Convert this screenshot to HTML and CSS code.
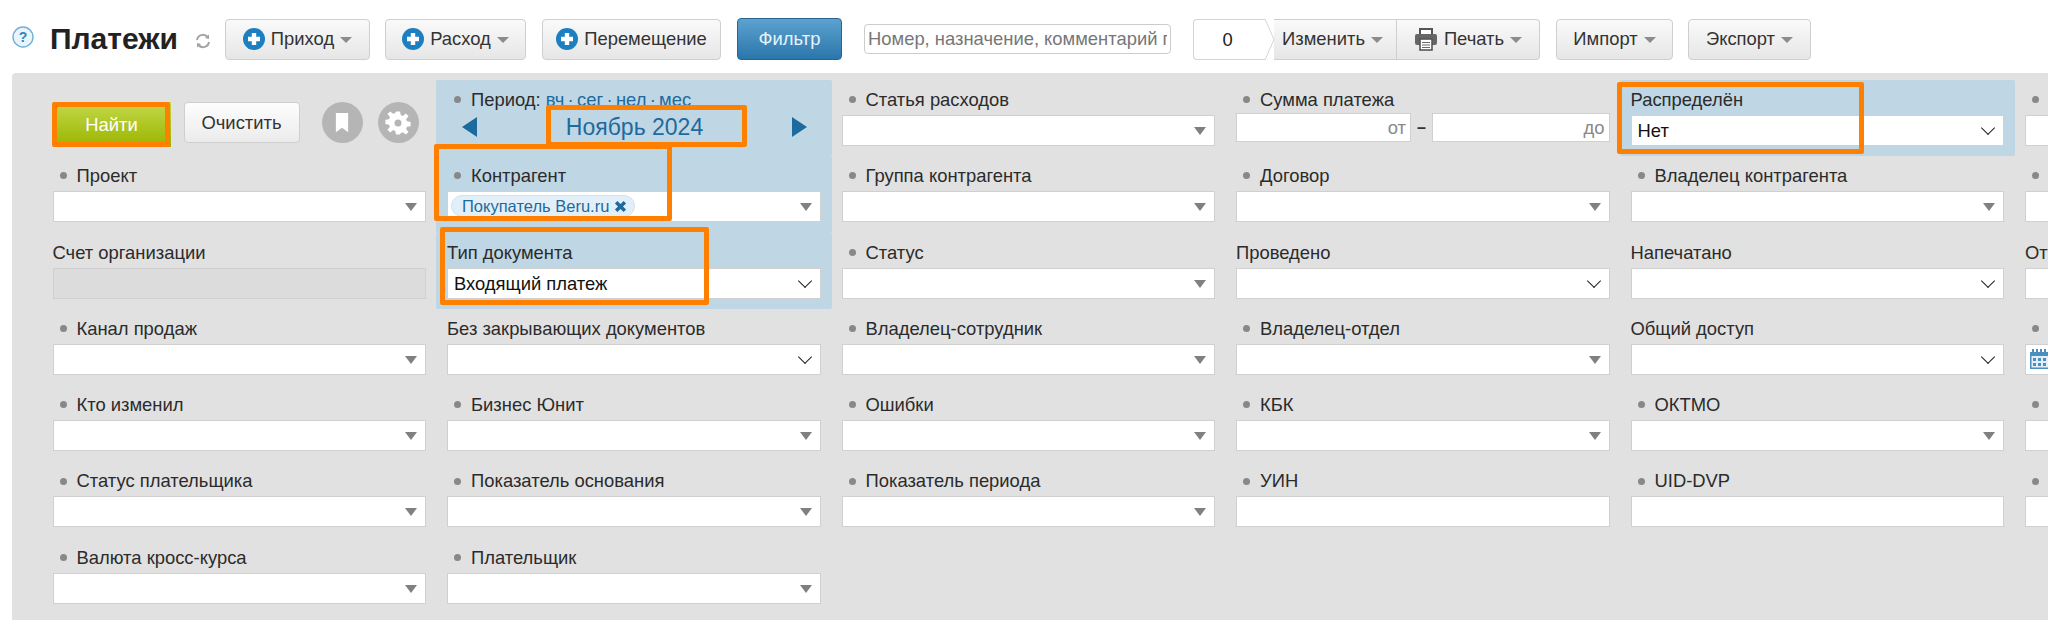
FILE: index.html
```html
<!DOCTYPE html>
<html>
    <head>
        <meta charset="utf-8">
        <title>Платежи</title>
        <link rel="stylesheet" href="styles.css">
    </head>
    <body>
        <svg width="0" height="0" class="defs">
            <symbol id="plus" viewBox="0 0 22 22">
                <circle cx="11" cy="11" r="11" fill="#1d7fbf"/>
                <path d="M11 5v12M5 11h12" stroke="#fff" stroke-width="4.4"/>
            </symbol>
        </svg>
        <div class="toolbar">
            <svg class="help" viewBox="0 0 22 22"><circle cx="11" cy="11" r="10" fill="#eaf5fb" stroke="#6fb1d8" stroke-width="1.4"/><text x="11" y="15.5" text-anchor="middle" class="help-mark">?</text></svg>
            <h1>Платежи</h1>
            <svg class="refresh" viewBox="0 0 16 16" fill="none" stroke="#a3a3a3" stroke-width="2"><path d="M2 7a6 6 0 0 1 10.5-3"/><path d="M14 9a6 6 0 0 1-10.5 3"/><path d="M10 5l4 1V1.500z" fill="#a3a3a3" stroke="none"/><path d="M6 11l-4-1v4.500z" fill="#a3a3a3" stroke="none"/></svg>
            <button class="btn w-prihod"><svg class="plus"><use href="#plus"/></svg>Приход<span class="caret"></span></button>
            <button class="btn w-rashod"><svg class="plus"><use href="#plus"/></svg>Расход<span class="caret"></span></button>
            <button class="btn w-move"><svg class="plus"><use href="#plus"/></svg>Перемещение</button>
            <button class="btn-filter">Фильтр</button>
            <input class="search" type="text" placeholder="Номер, назначение, комментарий плательщика">
            <div class="group">
                <div class="count">0</div>
                <svg class="count-tip" viewBox="0 0 10 41" preserveAspectRatio="none"><path d="M0 0l9 20.500L0 41" fill="#fff" stroke="#d4d4d4"/></svg>
                <div class="group-item g-edit">Изменить<span class="caret"></span></div>
                <div class="group-item g-print">
                    <svg class="print" viewBox="0 0 24 24"><path d="M6 7V2h12v5" fill="#fff" stroke="#555" stroke-width="2"/><rect x="1" y="7" width="22" height="11" rx="2" fill="#666"/><rect x="6" y="12" width="12" height="11" fill="#fff" stroke="#555" stroke-width="1.600"/><path d="M8 15.500h8M8 18h8M8 20.500h8" stroke="#666"/></svg>
                    Печать<span class="caret"></span>
                </div>
            </div>
            <button class="btn w-import">Импорт<span class="caret"></span></button>
            <button class="btn w-export">Экспорт<span class="caret"></span></button>
        </div>

        <div class="panel">
            <div class="grid">
                <div class="field actions">
                    <button class="btn-find">Найти</button>
                    <button class="btn-clear">Очистить</button>
                    <div class="round"><svg viewBox="0 0 16 22" width="14" height="21"><path d="M1 0h14v22l-7-5-7 5z" fill="#fff"/></svg></div>
                    <div class="round"><svg viewBox="0 0 24 24" width="28" height="28"><path d="M10 1h4l.6 3.400 2 .9L19.500 3l2.500 2.500-2.300 2.900.9 2 3.400.6v4l-3.400.6-.9 2 2.300 2.900-2.500 2.500-2.900-2.300-2 .9L14 23h-4l-.6-3.400-2-.9L4.500 21 2 18.500l2.300-2.900-.9-2L0 13V9l3.400-.6.900-2L2 3.500 4.500 1l2.900 2.300 2-.9z" fill="#fff" transform="translate(1.200 1.200) scale(.9)"/><circle cx="12" cy="12" r="3" fill="#b5b5b5"/></svg></div>
                </div>
                <div class="field hl period">
                    <div class="label"><i class="dot"></i>Период: <a class="periods">вч · сег · нел · мес</a></div>
                    <div class="month-row">
                        <span class="arrow-left"></span>
                        <span class="month">Ноябрь 2024</span>
                        <span class="arrow-right"></span>
                    </div>
                </div>
                <div class="field"><div class="label"><i class="dot"></i>Статья расходов</div><div class="box tri"></div></div>
                <div class="field"><div class="label"><i class="dot"></i>Сумма платежа</div>
                    <div class="range"><div class="box small">от</div><span class="dash">–</span><div class="box small grow">до</div></div>
                </div>
                <div class="field hl"><div class="label">Распределён</div><div class="box chev value">Нет</div></div>
                <div class="field"><div class="label"><i class="dot"></i></div><div class="box"></div></div>

                <div class="field"><div class="label"><i class="dot"></i>Проект</div><div class="box tri"></div></div>
                <div class="field hl"><div class="label"><i class="dot"></i>Контрагент</div><div class="box tri"><span class="chip">Покупатель Beru.ru<svg class="chip-x" viewBox="0 0 12 12"><path d="M2 2l8 8M10 2l-8 8" stroke="#1d6a9e" stroke-width="3.2"/></svg></span></div></div>
                <div class="field"><div class="label"><i class="dot"></i>Группа контрагента</div><div class="box tri"></div></div>
                <div class="field"><div class="label"><i class="dot"></i>Договор</div><div class="box tri"></div></div>
                <div class="field"><div class="label"><i class="dot"></i>Владелец контрагента</div><div class="box tri"></div></div>
                <div class="field"><div class="label"><i class="dot"></i></div><div class="box"></div></div>

                <div class="field"><div class="label">Счет организации</div><div class="box disabled"></div></div>
                <div class="field hl"><div class="label">Тип документа</div><div class="box chev value">Входящий платеж</div></div>
                <div class="field"><div class="label"><i class="dot"></i>Статус</div><div class="box tri"></div></div>
                <div class="field"><div class="label">Проведено</div><div class="box chev"></div></div>
                <div class="field"><div class="label">Напечатано</div><div class="box chev"></div></div>
                <div class="field"><div class="label">От</div><div class="box"></div></div>

                <div class="field"><div class="label"><i class="dot"></i>Канал продаж</div><div class="box tri"></div></div>
                <div class="field"><div class="label">Без закрывающих документов</div><div class="box chev"></div></div>
                <div class="field"><div class="label"><i class="dot"></i>Владелец-сотрудник</div><div class="box tri"></div></div>
                <div class="field"><div class="label"><i class="dot"></i>Владелец-отдел</div><div class="box tri"></div></div>
                <div class="field"><div class="label">Общий доступ</div><div class="box chev"></div></div>
                <div class="field"><div class="label"><i class="dot"></i></div>
                    <div class="box"><svg class="cal" viewBox="0 0 20 20"><path d="M0 3h20v17H0z" fill="#4a8fc0"/><path d="M2 0h2v4H2zM6 0h2v4H6zM10 0h2v4h-2zM14 0h2v4h-2z" fill="#4a8fc0"/><path d="M1.500 7h17v11.500h-17z" fill="#e3eef6"/><path d="M3 9h3v3H3zM8 9h3v3H8zM13 9h3v3h-3zM3 14h3v3H3zM8 14h3v3H8zM13 14h3v3h-3z" fill="#4a8fc0"/></svg></div>
                </div>

                <div class="field"><div class="label"><i class="dot"></i>Кто изменил</div><div class="box tri"></div></div>
                <div class="field"><div class="label"><i class="dot"></i>Бизнес Юнит</div><div class="box tri"></div></div>
                <div class="field"><div class="label"><i class="dot"></i>Ошибки</div><div class="box tri"></div></div>
                <div class="field"><div class="label"><i class="dot"></i>КБК</div><div class="box tri"></div></div>
                <div class="field"><div class="label"><i class="dot"></i>ОКТМО</div><div class="box tri"></div></div>
                <div class="field"><div class="label"><i class="dot"></i></div><div class="box"></div></div>

                <div class="field"><div class="label"><i class="dot"></i>Статус плательщика</div><div class="box tri"></div></div>
                <div class="field"><div class="label"><i class="dot"></i>Показатель основания</div><div class="box tri"></div></div>
                <div class="field"><div class="label"><i class="dot"></i>Показатель периода</div><div class="box tri"></div></div>
                <div class="field"><div class="label"><i class="dot"></i>УИН</div><div class="box"></div></div>
                <div class="field"><div class="label"><i class="dot"></i>UID-DVP</div><div class="box"></div></div>
                <div class="field"><div class="label"><i class="dot"></i></div><div class="box"></div></div>

                <div class="field"><div class="label"><i class="dot"></i>Валюта кросс-курса</div><div class="box tri"></div></div>
                <div class="field"><div class="label"><i class="dot"></i>Плательщик</div><div class="box tri"></div></div>
            </div>
        </div>

        <!-- orange marks drawn over the screenshot -->
        <div class="mark m-find"></div>
        <div class="mark m-month"></div>
        <div class="mark m-agent"></div>
        <div class="mark m-type"></div>
        <div class="mark m-dist"></div>
    </body>
</html>
```

FILE: styles.css
```css
html, body {
    margin: 0;
    padding: 0;
    height: 620px;
    overflow: hidden;
    background: #fff;
    font-family: "Liberation Sans", Arial, sans-serif;
    color: #222;
}
.defs {
    position: absolute;
}
.toolbar {
    display: flex;
    align-items: center;
    height: 42px;
    padding: 18px 0 13px 12px;
    white-space: nowrap;
}
.help {
    width: 22px;
    height: 22px;
    margin-right: 16px;
    margin-top: -5px;
}
.help-mark {
    font-size: 14px;
    font-weight: bold;
    fill: #2f86bd;
    font-family: "Liberation Sans", sans-serif;
}
h1 {
    margin: 0;
    font-size: 30px;
    line-height: 42px;
    width: 129px;
    color: #222;
}
.refresh {
    width: 16px;
    height: 16px;
    margin: 4px 14px 0 16px;
}
.btn, .group-item {
    display: flex;
    align-items: center;
    justify-content: center;
    box-sizing: border-box;
    height: 41px;
    border: 1px solid #cfcfcf;
    border-radius: 4px;
    background: linear-gradient(#fafafa, #e6e6e6);
    font-family: inherit;
    font-size: 18.400px;
    color: #333;
    padding: 0;
}
.plus {
    width: 22px;
    height: 22px;
    margin-right: 6px;
}
.caret {
    display: inline-block;
    width: 0;
    height: 0;
    margin-left: 6px;
    margin-top: 2px;
    border-left: 6.500px solid transparent;
    border-right: 6.500px solid transparent;
    border-top: 6px solid #8c8c8c;
}
.w-prihod { width: 145px; margin-right: 15px; }
.w-rashod { width: 141px; margin-right: 16px; }
.w-move { width: 179px; margin-right: 16px; }
.w-import { width: 117px; margin-right: 15px; }
.w-export { width: 123px; }
.btn-filter {
    box-sizing: border-box;
    width: 105px;
    height: 42px;
    margin-right: 22px;
    border: 1px solid #2a6491;
    border-radius: 4px;
    background: linear-gradient(#5da2d0, #2a76ab);
    color: #e8f3fa;
    font-family: inherit;
    font-size: 18.400px;
}
.search {
    box-sizing: border-box;
    width: 307px;
    height: 30px;
    margin-right: 22px;
    padding: 0 3px;
    border: 1px solid #ccc;
    border-radius: 4px;
    font-family: inherit;
    font-size: 18.400px;
}
.search::placeholder {
    color: #777;
}
.group {
    display: flex;
    align-items: center;
    position: relative;
    margin-right: 16px;
}
.count {
    box-sizing: border-box;
    width: 72px;
    height: 41px;
    line-height: 39px;
    text-align: center;
    padding-right: 4px;
    font-size: 18.400px;
    border: 1px solid #d4d4d4;
    border-right: none;
    border-radius: 4px 0 0 4px;
    background: #fff;
}
.count-tip {
    width: 10px;
    height: 41px;
    margin-right: -1px;
    position: relative;
    z-index: 1;
}
.g-edit {
    width: 123px;
    padding-right: 5px;
    border-radius: 0;
    border-left: none;
}
.g-print {
    width: 143px;
    border-left: none;
    border-radius: 0 4px 4px 0;
}
.print {
    width: 24px;
    height: 24px;
    margin-right: 6px;
}
.panel {
    margin-left: 12px;
    height: 547px;
    padding: 7px 0 0 40.500px;
    box-sizing: border-box;
    background: #e1e1e1;
    border-radius: 4px 0 0 0;
    overflow: hidden;
}
.grid {
    display: grid;
    grid-template-columns: repeat(6, 373.500px);
    grid-auto-rows: 76.300px;
    column-gap: 21px;
    width: 2400px;
}
.field {
    position: relative;
    min-width: 0;
}
.hl {
    margin: 0 -11px;
    padding: 0 11px;
    background: #bfd6e4;
    border-radius: 2px;
}
.label {
    height: 35px;
    padding-top: 10px;
    box-sizing: border-box;
    line-height: 20px;
    font-size: 18.400px;
    color: #2b2b2b;
    white-space: nowrap;
}
.dot {
    display: inline-block;
    width: 7px;
    height: 7px;
    margin: 0 10px 3px 7px;
    border-radius: 50%;
    background: #888;
    vertical-align: middle;
}
.box {
    position: relative;
    box-sizing: border-box;
    height: 31px;
    border: 1.500px solid #d0d0d0;
    background: #fff;
    font-size: 18.400px;
    line-height: 30px;
    padding-left: 6px;
    color: #111;
}
.tri::after {
    content: "";
    position: absolute;
    right: 8px;
    top: 11px;
    border-left: 6px solid transparent;
    border-right: 6px solid transparent;
    border-top: 8px solid #808080;
}
.chev::after {
    content: "";
    position: absolute;
    right: 10px;
    top: 7px;
    width: 9px;
    height: 9px;
    border-right: 1.500px solid #222;
    border-bottom: 1.500px solid #222;
    transform: rotate(45deg);
}
.disabled {
    background: #dcdcdc;
}
.range {
    display: flex;
    align-items: center;
}
.small {
    width: 175px;
    height: 29px;
    line-height: 27px;
    text-align: right;
    padding-right: 4px;
    color: #888;
    margin-top: -2px;
}
.grow {
    flex: 1;
}
.dash {
    width: 21px;
    text-align: center;
    color: #333;
    font-weight: bold;
    margin-top: -2px;
}
.chip {
    display: inline-block;
    box-sizing: border-box;
    height: 22px;
    line-height: 20px;
    margin-left: -3px;
    padding: 0 7px 0 10px;
    border: 1px solid #cfe2ef;
    border-radius: 11px;
    background: #e2eff8;
    color: #1d6a9e;
    font-size: 16.500px;
    vertical-align: top;
    margin-top: 3px;
}
.chip-x {
    width: 13px;
    height: 13px;
    margin-left: 5px;
    vertical-align: -1px;
}
.actions {
    display: flex;
    align-items: flex-start;
    padding-top: 22px;
    box-sizing: border-box;
}
.btn-find {
    flex: none;
    box-sizing: border-box;
    width: 118px;
    height: 45px;
    border: none;
    background: linear-gradient(#c4d94a, #9ab400);
    color: #fff;
    font-family: inherit;
    font-size: 18.400px;
    margin-right: 13px;
}
.btn-clear {
    flex: none;
    box-sizing: border-box;
    width: 116px;
    height: 41px;
    border: 1px solid #cfcfcf;
    border-radius: 4px;
    background: linear-gradient(#fdfdfd, #ebebeb);
    color: #333;
    font-family: inherit;
    font-size: 18.400px;
    margin-right: 22px;
}
.round {
    display: flex;
    align-items: center;
    justify-content: center;
    flex: none;
    width: 41px;
    height: 41px;
    margin-right: 15px;
    border-radius: 50%;
    background: #b5b5b5;
}
.periods {
    color: #1d6a9e;
    word-spacing: -1.800px;
}
.month-row {
    display: flex;
    align-items: center;
    height: 24px;
    padding-left: 15px;
}
.arrow-left {
    border-top: 10px solid transparent;
    border-bottom: 10px solid transparent;
    border-right: 15px solid #1d6a9e;
}
.arrow-right {
    border-top: 10px solid transparent;
    border-bottom: 10px solid transparent;
    border-left: 15px solid #1d6a9e;
}
.month {
    width: 315px;
    text-align: center;
    color: #1d6a9e;
    font-size: 23px;
}
.cal {
    position: absolute;
    left: 4px;
    top: 4px;
    width: 20px;
    height: 20px;
}
.mark {
    position: absolute;
    box-sizing: border-box;
    border: 5px solid #ff8000;
    border-radius: 2px;
}
.m-find { left: 52px; top: 102px; width: 118px; height: 45px; }
.m-month { left: 546px; top: 105px; width: 201px; height: 42px; }
.m-agent { left: 434px; top: 144px; width: 238px; height: 77px; }
.m-type { left: 440px; top: 227px; width: 269px; height: 78px; }
.m-dist { left: 1617px; top: 82px; width: 247px; height: 72px; }
```
